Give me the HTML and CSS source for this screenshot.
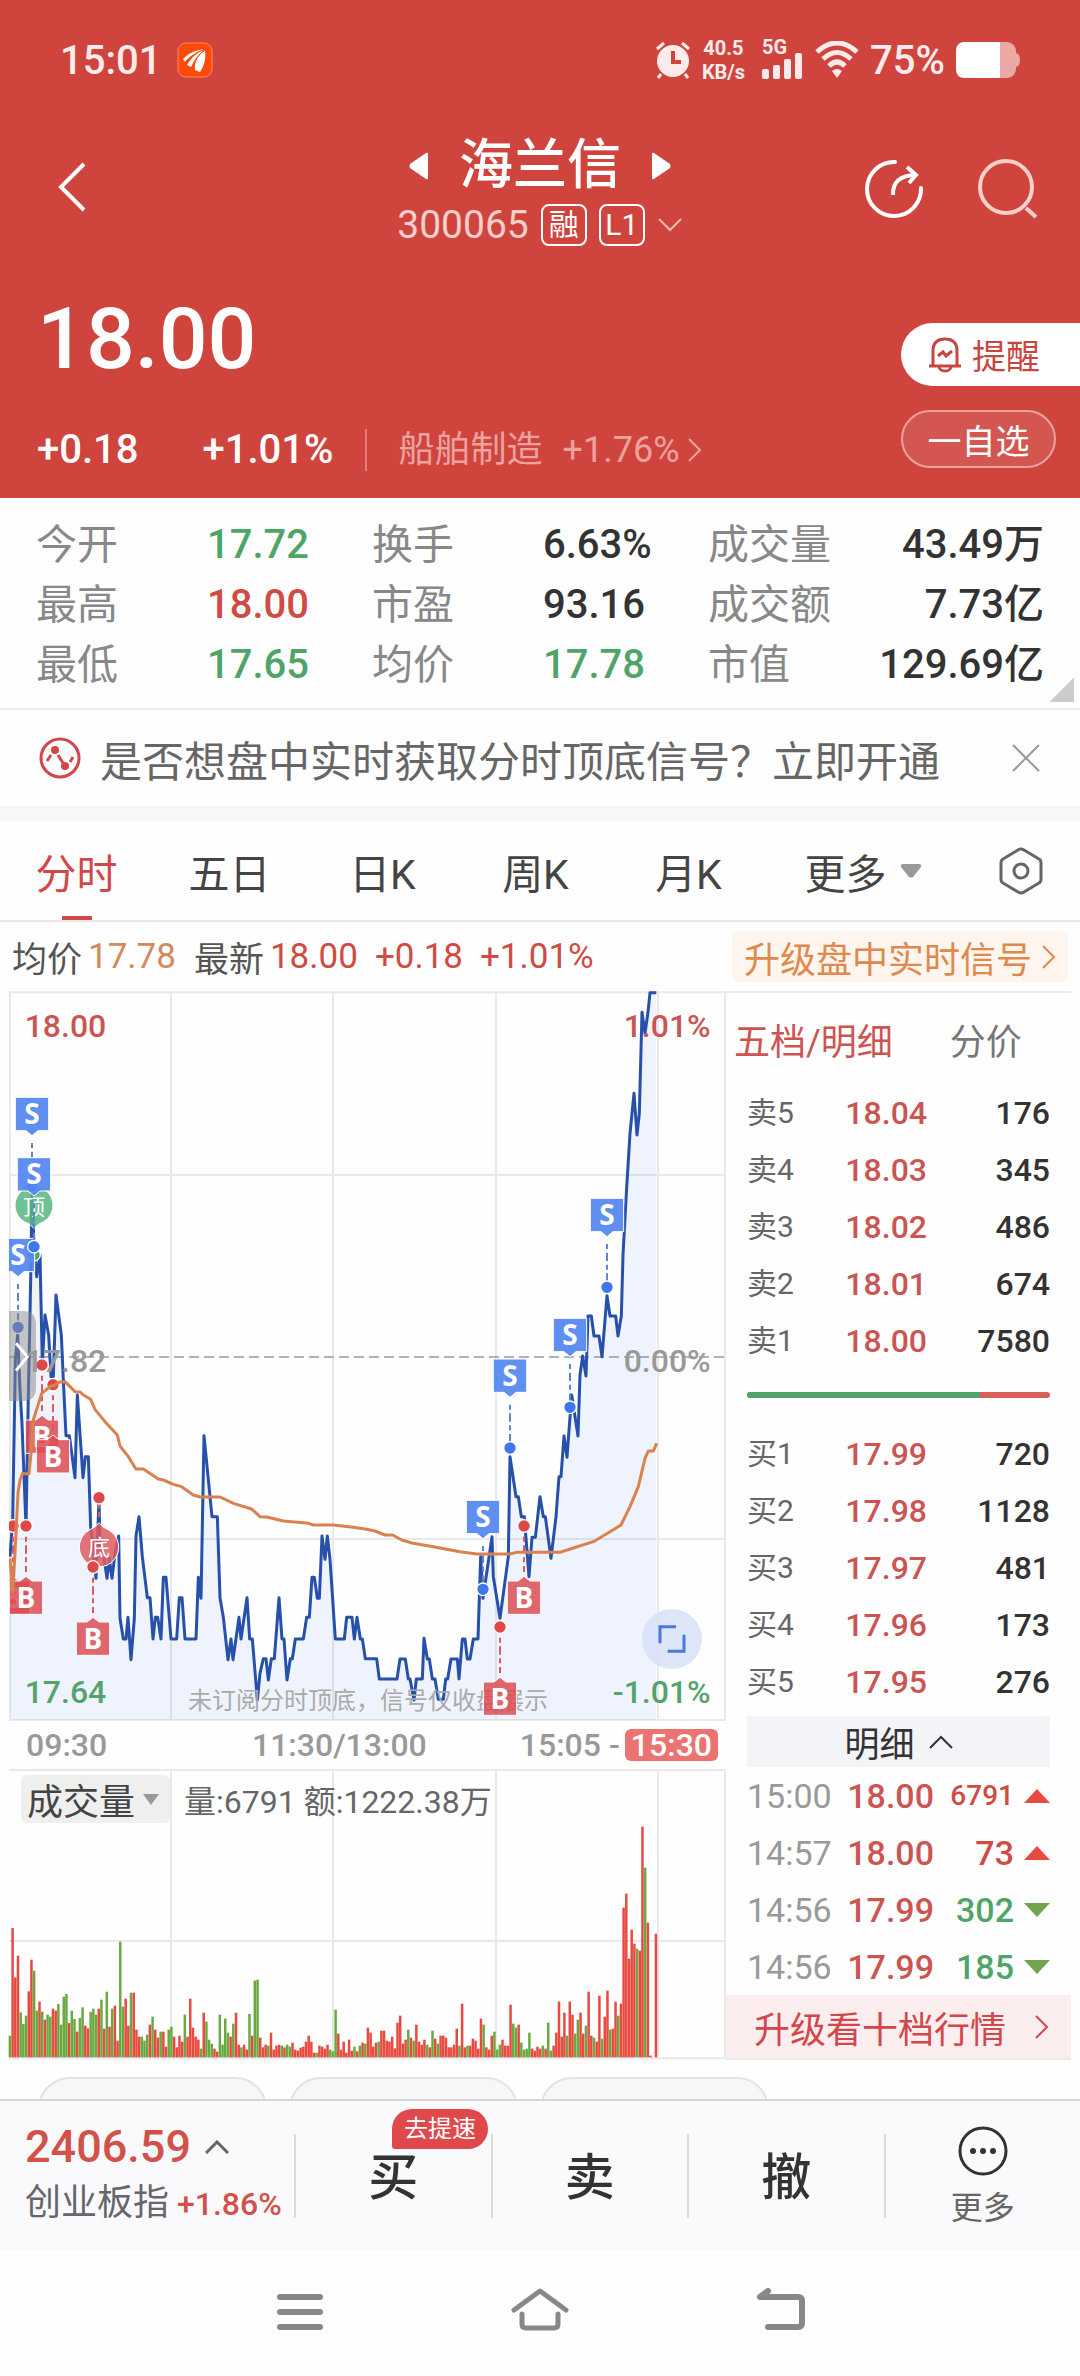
FILE: index.html
```html
<!DOCTYPE html>
<html lang="zh-CN">
<head>
    <meta charset="UTF-8">
    <meta name="viewport" content="width=device-width, initial-scale=1.0">
    <title>海兰信 300065</title>
    <link rel="stylesheet" href="styles.css">
</head>
<body>
    <header class="top">
        <div class="status-bar">
            <span class="clock">15:01</span>
            <svg class="app-icon" width="36" height="36" viewBox="0 0 36 36">
                <rect x="1" y="1" width="34" height="34" rx="8" fill="#ff4a0a" stroke="#ff8a55"/>
                <path d="M6 17C12 11 18 8 28 7C20 10 13 14 8 20zM10 23C14 16 19 11 27 8C21 13 17 18 14 25zM18 28C17 20 21 13 28 8C29 15 28 23 23 30z" fill="#fff"/>
                <path d="M7 21Q15 12 28 7M15 27Q18 15 28 8" fill="none" stroke="#ff4a0a" stroke-width="1"/>
            </svg>
            <div class="status-right">
                <svg width="36" height="38" viewBox="0 0 36 38">
                    <circle cx="18" cy="20" r="16" fill="#fdeaea"/>
                    <path d="M2 8L9 2M34 8L27 2M6 33L3 37M30 33L33 37" stroke="#fdeaea" stroke-width="3"/>
                    <path d="M18 10V21H26" fill="none" stroke="#cf453e" stroke-width="4"/>
                </svg>
                <div class="speed"><span>40.5</span><span>KB/s</span></div>
                <div class="signal">
                    <span>5G</span>
                    <svg width="42" height="26" viewBox="0 0 42 26" fill="#fdeaea">
                        <rect x="0" y="16" width="7" height="10" rx="2"/>
                        <rect x="11" y="12" width="7" height="14" rx="2"/>
                        <rect x="22" y="6" width="7" height="20" rx="2"/>
                        <rect x="33" y="0" width="7" height="26" rx="2"/>
                    </svg>
                </div>
                <svg width="44" height="38" viewBox="0 0 44 38">
                    <path d="M2 11Q22 -7 42 11M8 18Q22 5 36 18M14 25Q22 17 30 25" fill="none" stroke="#fdeaea" stroke-width="5"/>
                    <path d="M17 30Q22 26 27 30L22 37z" fill="#fdeaea"/>
                </svg>
                <span class="percent">75%</span>
                <svg width="64" height="36" viewBox="0 0 64 36">
                    <rect x="0" y="0" width="60" height="36" rx="9" fill="#eba9a6"/>
                    <path d="M60 11Q64 12 64 18Q64 24 60 25z" fill="#eba9a6"/>
                    <path d="M9 0H44V36H9Q0 36 0 27V9Q0 0 9 0z" fill="#fff"/>
                </svg>
            </div>
        </div>

        <div class="title-bar">
            <div class="title-back">
                <button class="icon-button" aria-label="返回">
                    <svg width="28" height="50" viewBox="0 0 28 50"><path d="M26 2L3 25L26 48" fill="none" stroke="#fff" stroke-width="4"/></svg>
                </button>
            </div>
            <div class="stock">
                <div class="stock-name">
                    <svg width="20" height="28" viewBox="0 0 20 28"><path d="M19 2V26Q19 28 17 27L1 16Q0 14 1 12L17 1Q19 0 19 2z" fill="#fff"/></svg>
                    <h1>海兰信</h1>
                    <svg width="20" height="28" viewBox="0 0 20 28"><path d="M1 2V26Q1 28 3 27L19 16Q20 14 19 12L3 1Q1 0 1 2z" fill="#fff"/></svg>
                </div>
                <div class="stock-code">
                    <span>300065</span>
                    <span class="mark">融</span>
                    <span class="mark">L1</span>
                    <svg width="26" height="14" viewBox="0 0 26 14"><path d="M2 1L13 12L24 1" fill="none" stroke="#f3b9b6" stroke-width="2"/></svg>
                </div>
            </div>
            <div class="title-actions">
                <button class="icon-button" aria-label="分享">
                    <svg width="60" height="60" viewBox="0 0 60 60" fill="none" stroke="#fff" stroke-width="4">
                        <path d="M31 3A27 27 0 1 0 57 29" stroke-linecap="round"/>
                        <path d="M29 36Q28 17 51 16M43 8L52 16L45 24"/>
                    </svg>
                </button>
                <button class="icon-button" aria-label="搜索">
                    <svg width="60" height="60" viewBox="0 0 60 60" fill="none" stroke="#f9cfcc" stroke-width="4">
                        <circle cx="28" cy="28" r="26"/>
                        <path d="M48 49L58 58"/>
                    </svg>
                </button>
            </div>
        </div>

        <div class="quote">
            <div class="quote-main">
                <div class="price">18.00</div>
                <div class="change">
                    <span class="diff">+0.18</span>
                    <span class="rate">+1.01%</span>
                    <a class="sector" href="#">
                        <span>船舶制造</span>
                        <span>+1.76%</span>
                        <svg width="14" height="24" viewBox="0 0 14 24"><path d="M1 1L12 12L1 23" fill="none" stroke="#eda29f" stroke-width="2"/></svg>
                    </a>
                </div>
            </div>
            <div class="quote-actions">
                <button class="remind">
                    <svg width="34" height="36" viewBox="0 0 34 36" fill="none" stroke="#c9453f" stroke-width="3">
                        <path d="M5 28V14Q5 2 17 2Q29 2 29 14V28M1 29H33M11 30Q12 34 17 34Q22 34 23 30"/>
                        <path d="M10 19L15 15L18 19L24 14"/>
                    </svg>
                    提醒
                </button>
                <button class="favourite">一自选</button>
            </div>
        </div>
    </header>

    <main>
        <section class="stats">
            <dl>
                <dt>今开</dt><dd class="down">17.72</dd>
                <dt>换手</dt><dd>6.63%</dd>
                <dt>成交量</dt><dd>43.49万</dd>
                <dt>最高</dt><dd class="up">18.00</dd>
                <dt>市盈</dt><dd>93.16</dd>
                <dt>成交额</dt><dd>7.73亿</dd>
                <dt>最低</dt><dd class="down">17.65</dd>
                <dt>均价</dt><dd class="down">17.78</dd>
                <dt>市值</dt><dd>129.69亿</dd>
            </dl>
        </section>

        <section class="notice">
            <svg width="44" height="44" viewBox="0 0 44 44" fill="none" stroke="#d2474a" stroke-width="3">
                <circle cx="22" cy="22" r="19"/>
                <path d="M9 25L13 19M20 19L25 27M32 26L35 21"/>
                <circle cx="17" cy="14" r="4" fill="#d2474a" stroke="none"/>
                <circle cx="27" cy="30" r="4" fill="#d2474a" stroke="none"/>
            </svg>
            <p>是否想盘中实时获取分时顶底信号？立即开通</p>
            <button class="icon-button" aria-label="关闭">
                <svg width="28" height="28" viewBox="0 0 28 28"><path d="M1 1L27 27M27 1L1 27" stroke="#999" stroke-width="2"/></svg>
            </button>
        </section>

        <nav class="tabs">
            <button class="tab active">分时</button>
            <button class="tab">五日</button>
            <button class="tab">日K</button>
            <button class="tab">周K</button>
            <button class="tab">月K</button>
            <button class="tab tab-more">更多<svg width="22" height="14" viewBox="0 0 22 14"><path d="M2 0H20Q22 1 21 3L13 13Q11 14 9 13L1 3Q0 1 2 0z" fill="#999"/></svg></button>
            <button class="settings" aria-label="设置">
                <svg width="44" height="48" viewBox="0 0 44 48" fill="none" stroke="#666" stroke-width="3">
                    <path d="M19 3Q22 1 25 3L40 12Q42 13 42 16V32Q42 35 40 36L25 45Q22 47 19 45L4 36Q2 35 2 32V16Q2 13 4 12z"/>
                    <circle cx="22" cy="24" r="7"/>
                </svg>
            </button>
        </nav>

        <div class="legend">
            <span>均价</span><span class="avg">17.78</span>
            <span class="next">最新</span><span class="up">18.00</span>
            <span class="up wide">+0.18</span>
            <span class="up wide">+1.01%</span>
            <a class="signal-link" href="#">升级盘中实时信号<svg width="14" height="26" viewBox="0 0 14 26"><path d="M1 2L12 13L1 24" fill="none" stroke="#df8a4c" stroke-width="2"/></svg></a>
        </div>

        <div class="board">
            <div class="charts">
                <!-- price chart, three drawing units per pixel -->
                <svg class="price-chart" viewBox="0 33 2178 2190">
                    <defs>
                        <g id="sell">
                            <path d="M-50 0H50V100H18L0 115L-18 100H-50z" fill="#5386f0" fill-opacity=".93" stroke="#fff" stroke-width="3"/>
                            <path d="M0 137V250" stroke="#5c86c9" stroke-width="6" stroke-dasharray="15 11 25 11"/>
                            <circle cy="267" r="19" fill="#3e77ec" stroke="#fff" stroke-width="4"/>
                            <text y="80" class="tag">S</text>
                        </g>
                        <g id="buy">
                            <path d="M-50 165H-18L0 151L18 165H50V265H-50z" fill="#dd4c53" fill-opacity=".85" stroke="#fff" stroke-width="3"/>
                            <path d="M0 32V138" stroke="#d95a61" stroke-width="6" stroke-dasharray="15 11 25 11"/>
                            <circle r="19" fill="#e04848" stroke="#fff" stroke-width="4"/>
                            <text y="246" class="tag">B</text>
                        </g>
                        <clipPath id="plot"><rect x="27" y="30" width="2151" height="2193"/></clipPath>
                    </defs>
                    <g fill="none" stroke="#e9e9e9" stroke-width="6">
                        <path d="M27 37H2178M27 585H2175M27 1677H2175M27 2220H2178"/>
                        <path d="M30 37V2220M513 37V2220M999 37V2220M1488 37V2220M1974 37V2220M2175 37V2220"/>
                    </g>
                    <path d="M27 1131H2175" stroke="#999" stroke-width="5" stroke-dasharray="30 15"/>
                    <g clip-path="url(#plot)">
                        <path id="area" fill="#3e77ec" fill-opacity=".08"/>
                        <polyline id="line" fill="none" stroke="#2650aa" stroke-width="9" stroke-linejoin="round" points="30,1730 38,1620 46,1140 53,1065 60,1230 66,1330 78,1640 84,1300 90,1000 93,850 96,620 102,800 110,890 120,825 127,1150 135,1005 146,1065 153,1190 160,1190 168,945 184,1065 190,1200 198,1367 208,1367 225,1493 232,1245 249,1493 256,1430 265,1430 272,1640 288,1795 297,1560 300,1700 312,1735 321,1795 328,1735 336,1795 345,1720 356,1668 360,1915 370,1977 378,1977 384,1912 393,2039 403,1915 408,1668 417,1610 427,1730 442,1853 450,1853 459,1977 466,1912 473,1912 483,1977 490,1792 498,1792 513,1977 530,1977 538,1853 546,1853 555,1977 588,1977 595,1792 603,1855 612,1367 636,1610 652,1610 660,1853 670,1912 684,2039 693,1977 699,2039 717,1912 723,1977 741,1853 749,1977 757,1977 772,2160 780,2080 790,2036 798,2036 805,2100 814,2036 823,2036 837,1853 846,1977 852,1977 861,2100 871,2036 877,2036 886,1977 910,1977 920,1912 928,1912 936,1792 943,1792 952,1855 958,1855 966,1668 975,1738 982,1668 990,1738 1006,1977 1033,1977 1040,1912 1056,1912 1063,1977 1071,1912 1081,1977 1087,1977 1096,2036 1130,2036 1138,2097 1191,2097 1200,2037 1216,2037 1225,2097 1230,2097 1242,2160 1249,2097 1267,2097 1272,1975 1282,2037 1288,2037 1297,2097 1305,2097 1315,2158 1330,2158 1337,2097 1343,2097 1353,2037 1372,2037 1377,2097 1387,1977 1395,1977 1402,2037 1410,2037 1420,1977 1434,1977 1442,1730 1449,1855 1476,1670 1480,1790 1500,1915 1525,1730 1530,1430 1548,1550 1555,1550 1564,1610 1573,1610 1587,1790 1596,1672 1606,1672 1620,1550 1630,1610 1636,1610 1653,1735 1668,1610 1677,1490 1683,1490 1692,1368 1701,1432 1715,1245 1734,1368 1740,1185 1748,1128 1758,1188 1764,1008 1774,1008 1782,1068 1797,1068 1806,1130 1821,947 1830,1008 1847,1008 1854,1068 1864,1008 1869,825 1879,640 1890,460 1902,340 1911,465 1918,400 1926,97 1935,160 1944,97 1950,38 1969,38"/>
                        <circle cx="102" cy="824" r="19" fill="#4aa56f" stroke="#fff" stroke-width="4"/>
                        <path d="M102 746Q93 732 73 725A57 57 0 1 1 131 725Q111 732 102 746z" fill="#58b584" fill-opacity=".85" stroke="#fff" stroke-width="3"/>
                        <text x="102" y="705" class="pin">顶</text>
                        <use href="#sell" x="54" y="775"/>
                        <use href="#sell" x="96" y="352"/>
                        <use href="#sell" x="102" y="533"/>
                        <use href="#sell" x="1449" y="1561"/>
                        <use href="#sell" x="1530" y="1137"/>
                        <use href="#sell" x="1710" y="1015"/>
                        <use href="#sell" x="1821" y="655"/>
                        <use href="#buy" x="39" y="1638"/>
                        <use href="#buy" x="78" y="1638"/>
                        <use href="#buy" x="126" y="1155"/>
                        <use href="#buy" x="159" y="1214"/>
                        <path d="M297 1628Q306 1642 326 1650A59 59 0 1 1 268 1650Q288 1642 297 1628z" fill="#dd5a62" fill-opacity=".85" stroke="#fff" stroke-width="3"/>
                        <path d="M297 1570V1620" stroke="#d95a61" stroke-width="6" stroke-dasharray="15 11"/>
                        <circle cx="297" cy="1553" r="19" fill="#e04848" stroke="#fff" stroke-width="4"/>
                        <text x="297" y="1726" class="pin">底</text>
                        <use href="#buy" x="279" y="1761"/>
                        <use href="#buy" x="1572" y="1638"/>
                        <polyline fill="none" stroke="#d9814f" stroke-width="9" stroke-linejoin="round" points="30,1735 38,1840 45,1720 54,1540 60,1500 68,1481 87,1481 93,1420 100,1320 125,1240 150,1220 165,1215 175,1207 195,1205 225,1235 240,1236 250,1245 272,1258 285,1288 315,1325 352,1365 360,1398 385,1430 408,1467 430,1467 475,1497 490,1500 520,1513 545,1520 580,1545 600,1551 660,1551 700,1570 755,1587 780,1610 800,1611 850,1623 925,1630 940,1635 1000,1635 1060,1642 1100,1648 1125,1653 1155,1665 1178,1665 1205,1680 1240,1690 1300,1700 1380,1715 1430,1722 1530,1722 1550,1717 1680,1717 1720,1704 1780,1685 1830,1655 1863,1635 1890,1580 1915,1520 1935,1435 1945,1413 1960,1413 1970,1390"/>
                        <text x="564" y="2188" class="hint">未订阅分时顶底，信号仅收盘展示</text>
                        <use href="#buy" x="1500" y="1941"/>
                        <path d="M27 993H68Q108 993 108 1033V1223Q108 1263 68 1263H27z" fill="#888" fill-opacity=".5"/>
                        <path d="M48 1090L82 1130L48 1172" fill="none" stroke="#fff" stroke-width="9"/>
                    </g>
                    <g class="scale">
                        <text x="74" y="171" fill="#cb5553">18.00</text>
                        <text x="74" y="1176" fill="#999">17.82</text>
                        <text x="74" y="2168" fill="#55a36c">17.64</text>
                        <text x="2132" y="171" fill="#cb5553" text-anchor="end">1.01%</text>
                        <text x="2132" y="1176" fill="#999" text-anchor="end">0.00%</text>
                        <text x="2132" y="2168" fill="#55a36c" text-anchor="end">-1.01%</text>
                    </g>
                    <circle cx="2016" cy="1977" r="90" fill="#d5dff8" fill-opacity=".8"/>
                    <path d="M1980 1990V1940H2028M2052 1964V2014H2003" fill="none" stroke="#4a78e0" stroke-width="9"/>
                </svg>

                <div class="time-axis">
                    <span>09:30</span>
                    <span class="noon">11:30/13:00</span>
                    <span>15:05 -</span><span class="after-hours">15:30</span>
                </div>

                <div class="volume">
                    <svg class="volume-chart" viewBox="0 87 2178 873">
                        <g fill="none" stroke="#e9e9e9" stroke-width="6">
                            <path d="M27 90H2178M27 603H2175M27 955H2178"/>
                            <path d="M513 90V955M999 90V955M1488 90V955M1974 90V955M2175 90V955"/>
                        </g>
                        <g id="bars"></g>
                    </svg>
                    <div class="volume-legend">
                        <button>成交量<svg width="16" height="11" viewBox="0 0 16 11"><path d="M0 0H16L8 11z" fill="#999"/></svg></button>
                        <span>量:6791 额:1222.38万</span>
                    </div>
                </div>
            </div>

            <aside class="depth">
                <div class="depth-tabs">
                    <button class="active">五档/明细</button>
                    <button>分价</button>
                </div>
                <table class="levels">
                    <tr><th>卖5</th><td>18.04</td><td>176</td></tr>
                    <tr><th>卖4</th><td>18.03</td><td>345</td></tr>
                    <tr><th>卖3</th><td>18.02</td><td>486</td></tr>
                    <tr><th>卖2</th><td>18.01</td><td>674</td></tr>
                    <tr><th>卖1</th><td>18.00</td><td>7580</td></tr>
                </table>
                <div class="ratio"><span style="width: 77%"></span></div>
                <table class="levels">
                    <tr><th>买1</th><td>17.99</td><td>720</td></tr>
                    <tr><th>买2</th><td>17.98</td><td>1128</td></tr>
                    <tr><th>买3</th><td>17.97</td><td>481</td></tr>
                    <tr><th>买4</th><td>17.96</td><td>173</td></tr>
                    <tr><th>买5</th><td>17.95</td><td>276</td></tr>
                </table>
                <button class="detail">明细<svg width="24" height="14" viewBox="0 0 24 14"><path d="M1 13L12 2L23 13" fill="none" stroke="#333" stroke-width="2"/></svg></button>
                <table class="trades">
                    <tr><th>15:00</th><td>18.00</td><td class="up small">6791</td><td><svg width="26" height="14" viewBox="0 0 26 14"><path d="M0 14L13 0L26 14z" fill="#e84a3f"/></svg></td></tr>
                    <tr><th>14:57</th><td>18.00</td><td class="up">73</td><td><svg width="26" height="14" viewBox="0 0 26 14"><path d="M0 14L13 0L26 14z" fill="#e84a3f"/></svg></td></tr>
                    <tr><th>14:56</th><td>17.99</td><td class="down">302</td><td><svg width="26" height="14" viewBox="0 0 26 14"><path d="M0 0L13 14L26 0z" fill="#72a34d"/></svg></td></tr>
                    <tr><th>14:56</th><td>17.99</td><td class="down">185</td><td><svg width="26" height="14" viewBox="0 0 26 14"><path d="M0 0L13 14L26 0z" fill="#72a34d"/></svg></td></tr>
                </table>
                <a class="upgrade" href="#">升级看十档行情<svg width="14" height="26" viewBox="0 0 14 26"><path d="M1 2L12 13L1 24" fill="none" stroke="#d2474a" stroke-width="2"/></svg></a>
            </aside>
        </div>

        <div class="chips">
            <span class="chip"></span>
            <span class="chip"></span>
            <span class="chip"></span>
        </div>
    </main>

    <footer>
        <div class="trade-bar">
            <div class="index">
                <div class="index-value">2406.59<svg width="24" height="14" viewBox="0 0 24 14"><path d="M1 13L12 2L23 13" fill="none" stroke="#666" stroke-width="3"/></svg></div>
                <div class="index-name">创业板指<span>+1.86%</span></div>
            </div>
            <button class="trade">买<span class="badge">去提速</span></button>
            <button class="trade">卖</button>
            <button class="trade">撤</button>
            <button class="more">
                <svg width="50" height="50" viewBox="0 0 50 50">
                    <circle cx="25" cy="25" r="23" fill="none" stroke="#333" stroke-width="3"/>
                    <g fill="#333"><circle cx="15" cy="25" r="3"/><circle cx="25" cy="25" r="3"/><circle cx="35" cy="25" r="3"/></g>
                </svg>
                更多
            </button>
        </div>
        <div class="system-nav">
            <button class="icon-button" aria-label="最近任务">
                <svg width="60" height="46" viewBox="0 0 60 46"><path d="M10 9H50M10 24H50M10 39H50" stroke="#888" stroke-width="6" stroke-linecap="round"/></svg>
            </button>
            <button class="icon-button" aria-label="主屏幕">
                <svg width="60" height="46" viewBox="0 0 60 46" fill="none" stroke="#888" stroke-width="5" stroke-linecap="round" stroke-linejoin="round"><path d="M4 22L30 3L56 22M12 26V36Q12 40 16 40H44Q48 40 48 36V26"/></svg>
            </button>
            <button class="icon-button" aria-label="后退">
                <svg width="60" height="46" viewBox="0 0 60 46" fill="none" stroke="#888" stroke-width="6" stroke-linecap="round" stroke-linejoin="round"><path d="M18 3L10 9H48Q52 9 52 13V35Q52 39 48 39H18"/></svg>
            </button>
        </div>
    </footer>

    <script src="script.js"></script>
</body>
</html>
```

FILE: styles.css
```css
* {
    box-sizing: border-box;
}
body {
    margin: 0;
    font-family: Roboto, "Noto Sans CJK SC", sans-serif;
    background: #fefefe;
    color: #333;
}
button {
    padding: 0;
    border: none;
    background: none;
    font: inherit;
    color: inherit;
    cursor: pointer;
}
a {
    color: inherit;
    text-decoration: none;
}
svg {
    display: block;
    flex: none;
}
h1, p, dl, dd {
    margin: 0;
}
.up {
    color: #cf4b44;
}
.down {
    color: #4fa568;
}

/* header */
.top {
    height: 498px;
    background: #cf453e;
    color: #fff;
}
.status-bar {
    display: flex;
    align-items: center;
    gap: 16px;
    height: 120px;
    padding: 0 60px;
    color: #fdeaea;
}
.clock, .percent {
    font-size: 40px;
    font-weight: 500;
}
.status-right {
    display: flex;
    align-items: center;
    gap: 11px;
    margin-left: auto;
}
.speed {
    display: flex;
    flex-direction: column;
    align-items: center;
    margin-right: 6px;
    font-size: 20px;
    line-height: 24px;
    font-weight: 700;
}
.signal {
    display: flex;
    flex-direction: column;
    font-size: 20px;
    line-height: 12px;
    font-weight: 700;
}
.title-bar {
    display: flex;
    align-items: center;
    height: 138px;
    padding: 0 42px;
}
.title-bar > * {
    flex: 1;
}
.title-back .icon-button {
    margin-left: 16px;
}
.stock-name, .stock-code {
    display: flex;
    justify-content: center;
    align-items: center;
}
.stock-name {
    gap: 30px;
}
.stock-name h1 {
    font-size: 54px;
    line-height: 72px;
    font-weight: 500;
}
.stock-code {
    gap: 12px;
    font-size: 39px;
    line-height: 46px;
    color: #f9cfcc;
}
.mark {
    width: 46px;
    height: 42px;
    border: 2px solid #fff;
    border-radius: 8px;
    font-size: 30px;
    line-height: 38px;
    text-align: center;
    color: #fff;
}
.title-actions {
    display: flex;
    justify-content: flex-end;
    gap: 54px;
}
.quote {
    display: flex;
    justify-content: space-between;
}
.quote-main {
    padding: 31px 0 0 37px;
}
.price {
    font-size: 86px;
    line-height: 100px;
    font-weight: 500;
}
.change {
    display: flex;
    align-items: center;
    margin-top: 40px;
    font-size: 40px;
    line-height: 42px;
    font-weight: 500;
}
.rate {
    margin-left: 64px;
}
.sector {
    display: flex;
    align-items: center;
    gap: 20px;
    margin-left: 31px;
    padding-left: 32px;
    border-left: 2px solid #e07f7b;
    font-size: 36px;
    font-weight: 400;
    color: #eda29f;
}
.sector svg {
    margin-left: -12px;
}
.quote-actions {
    display: flex;
    flex-direction: column;
    gap: 24px;
    width: 179px;
    padding-top: 65px;
    font-size: 34px;
}
.remind {
    display: flex;
    align-items: center;
    gap: 10px;
    height: 63px;
    padding-left: 27px;
    border-radius: 32px 0 0 32px;
    background: #fff;
    color: #c9453f;
}
.favourite {
    width: 155px;
    height: 58px;
    border: 2px solid #eba19d;
    border-radius: 29px;
    background: #d35651;
}

/* day figures */
.stats {
    height: 212px;
    padding: 17px 36px 0;
    border-bottom: 2px solid #ececec;
    background: linear-gradient(135deg, transparent 50%, #ccc 50%) no-repeat right 6px bottom 6px / 24px 24px;
}
.stats dl {
    display: grid;
    grid-template-columns: repeat(3, minmax(0, 171fr) minmax(0, 165fr));
    font-size: 40px;
    line-height: 60px;
}
.stats dt {
    color: #888;
    font-size: 41px;
    white-space: nowrap;
}
.stats dd {
    font-weight: 500;
    white-space: nowrap;
}
.stats dd:nth-of-type(3n) {
    text-align: right;
}
.notice {
    display: flex;
    align-items: center;
    gap: 18px;
    height: 111px;
    padding: 0 40px 0 38px;
    border-bottom: 15px solid #f7f7f7;
    font-size: 42px;
    color: #666;
}
.notice p {
    flex: 1;
    white-space: nowrap;
}

/* period tabs */
.tabs {
    display: flex;
    align-items: center;
    height: 101px;
    border-bottom: 2px solid #e8e8e8;
    font-size: 41px;
    color: #444;
}
.tab {
    flex: 153;
    display: flex;
    justify-content: center;
    align-items: center;
    gap: 13px;
    height: 99px;
}
.tab-more {
    flex: 196;
}
.settings {
    flex: 119;
    display: flex;
    justify-content: center;
}
.tab.active {
    color: #d2474a;
    background: linear-gradient(#d2474a, #d2474a) no-repeat center bottom / 30px 4px;
}
.legend {
    display: flex;
    align-items: center;
    height: 69px;
    padding: 0 12px;
    font-size: 35px;
    color: #555;
    white-space: nowrap;
}
.legend .avg {
    margin-left: 6px;
    color: #d28a5c;
}
.legend .next {
    margin: 0 6px 0 18px;
}
.legend .wide {
    margin-left: 17px;
}
.signal-link {
    display: flex;
    align-items: center;
    gap: 10px;
    height: 51px;
    margin-left: auto;
    padding: 0 12px;
    border-radius: 6px;
    background: #fdf5ee;
    font-size: 36px;
    color: #df8a4c;
}

/* charts */
.board {
    display: flex;
}
.charts {
    flex: 726;
    min-width: 0;
}
.price-chart, .volume-chart {
    width: 100%;
    height: auto;
}
.tag {
    font: 700 84px "Open Sans", sans-serif;
    fill: #fff;
    text-anchor: middle;
}
.pin {
    font-size: 66px;
    fill: #fff;
    text-anchor: middle;
}
.hint {
    font-size: 72px;
    fill: #aaa;
}
.scale {
    font-size: 96px;
    font-weight: 500;
}
.time-axis {
    display: flex;
    align-items: center;
    height: 48px;
    padding: 0 8px 0 26px;
    font-size: 32px;
    font-weight: 500;
    color: #999;
}
.noon {
    margin: 0 93px 0 auto;
}
.after-hours {
    margin-left: 5px;
    padding: 0 6px;
    border-radius: 6px;
    background: #eb7371;
    line-height: 32px;
    color: #fff;
}
.volume {
    position: relative;
}
.volume-legend {
    position: absolute;
    left: 21px;
    top: 6px;
    display: flex;
    align-items: center;
    gap: 14px;
    font-size: 32px;
    color: #666;
    white-space: nowrap;
}
.volume-legend button {
    display: flex;
    align-items: center;
    gap: 8px;
    height: 48px;
    padding: 0 11px 0 6px;
    border-radius: 6px;
    background: #efefef;
    font-size: 36px;
    color: #444;
}

/* order book */
.depth {
    flex: 345;
    display: flex;
    flex-direction: column;
    margin-right: 9px;
    border-top: 2px solid #e9e9e9;
    border-bottom: 2px solid #e9e9e9;
}
.depth-tabs {
    display: flex;
    gap: 57px;
    height: 91px;
    padding-left: 8px;
    font-size: 36px;
    color: #777;
}
.depth-tabs .active {
    color: #cf5350;
}
.levels, .trades {
    margin: 0 21px;
    border-collapse: collapse;
    table-layout: fixed;
}
.levels th, .levels td, .trades th, .trades td {
    height: 57px;
    padding: 0;
    font-size: 32px;
    line-height: 56px;
    font-weight: 500;
    text-align: right;
}
.levels th {
    width: 80px;
    font-size: 30px;
    font-weight: 400;
    text-align: left;
    color: #666;
}
.levels td:nth-child(2) {
    width: 100px;
    color: #cb5553;
}
.ratio {
    height: 6px;
    margin: 23px 21px 27px;
    border-radius: 3px;
    background: #d95d58;
    overflow: hidden;
}
.ratio span {
    display: block;
    height: 6px;
    background: #55a36c;
}
.detail {
    display: flex;
    justify-content: center;
    align-items: center;
    gap: 14px;
    height: 51px;
    margin: 6px 21px 0;
    background: #f3f4f8;
    font-size: 35px;
}
.trades th, .trades td {
    font-size: 34px;
}
.trades th {
    width: 86px;
    font-weight: 400;
    text-align: left;
    color: #999;
}
.trades td:nth-child(2) {
    width: 101px;
    color: #cb5553;
}
.trades td:last-child {
    width: 36px;
}
.trades .small {
    font-size: 28px;
}
.trades svg {
    margin-left: auto;
}
.upgrade {
    display: flex;
    justify-content: space-between;
    align-items: center;
    flex: 1;
    padding: 0 22px 0 28px;
    background: #fceeee;
    font-size: 36px;
    color: #d2474a;
}
.chips {
    display: flex;
    gap: 22px;
    height: 39px;
    padding: 17px 38px 0;
    overflow: hidden;
}
.chip {
    width: 229px;
    height: 64px;
    border: 2px solid #e3e3e3;
    border-radius: 32px;
    background: #f7f7f7;
}

/* bottom bars */
.trade-bar {
    display: flex;
    align-items: center;
    height: 151px;
    border-top: 2px solid #d6d6d8;
    background: #fafafc;
}
.index {
    width: 294px;
    padding: 2px 0 0 25px;
    white-space: nowrap;
}
.index-value {
    display: flex;
    align-items: center;
    gap: 14px;
    font-size: 45px;
    line-height: 54px;
    font-weight: 500;
    color: #d2514a;
}
.index-name {
    font-size: 36px;
    line-height: 58px;
    color: #66666c;
}
.index-name span {
    margin-left: 8px;
    font-size: 32px;
    font-weight: 500;
    color: #d2514a;
}
.trade, .more {
    flex: 1;
    position: relative;
    height: 84px;
    border-left: 2px solid #dcdcde;
    font-size: 50px;
    font-weight: 500;
}
.trade {
    padding-bottom: 6px;
}
.more {
    display: flex;
    flex-direction: column;
    align-items: center;
    justify-content: center;
    gap: 10px;
    padding-top: 4px;
    font-size: 32px;
    line-height: 44px;
    font-weight: 400;
    color: #666;
}
.badge {
    position: absolute;
    left: 96px;
    top: -25px;
    padding: 0 12px;
    border-radius: 20px 20px 20px 3px;
    background: #e0484c;
    font-size: 24px;
    line-height: 40px;
    font-weight: 400;
    color: #fff;
    white-space: nowrap;
}
.system-nav {
    display: flex;
    justify-content: center;
    gap: 180px;
    padding: 38px 0 42px;
}
```

FILE: script.js
```js
// one bar per minute: height followed by r (up) or g (down)
const volumes = '65g 388r 240r 305r 135g 100g 125g 198r 293r 260g 140g 167r 137g 113r 128g 122g 146r 140r 160g 98g ' +
    '182g 190g 103r 140g 115g 77r 118g 150g 95r 87r 136g 146g 128g 146r 173g 86r 197g 92r 146g 155r ' +
    '50r 347g 152g 176r 95r 194g 194r 83r 62r 62g 50g 68g 98r 122g 83r 59r 77g 77r 32r 83g ' +
    '92g 62r 30r 65r 47r 128g 62r 176r 89r 62r 53r 26g 134r 107g 53g 41g 26r 17r 128g 38g ' +
    '116g 74g 62r 101g 134r 38r 30g 38r 23r 130g 65r 230g 233g 59r 30r 38r 35g 74r 23r 35r ' +
    '38r 35g 30r 38g 32g 44r 23r 20r 29r 32r 47r 65r 47r 14r 14g 35r 32r 26r 38r 23g ' +
    '18g 143g 71r 23r 47r 14r 53r 20r 32g 18r 35g 44r 41g 89r 74r 32r 44r 47g 80r 80r ' +
    '50r 47r 62r 27r 104r 125r 41r 53r 83g 59r 50g 98r 47r 38r 53r 38g 30r 80g 56r 41g ' +
    '65r 65r 59r 30r 30r 38r 86r 35g 161r 30r 35g 35r 56r 50r 26r 116r 98g 30r 23r 65r ' +
    '77g 23g 38g 53r 35r 35r 158r 101g 89g 98r 44g 23g 26g 74g 26r 20r 32r 26r 35g 26r ' +
    '104g 20g 35r 74r 167r 62r 134r 65g 167r 128r 71g 113g 134r 71r 95g 197r 65r 59g 47r 185r ' +
    '56g 122r 200r 83g 86r 167r 125g 161r 449r 491r 296r 383r 341r 326g 320r 692r 569g 404r 5r 0r 371r';

const bars = document.getElementById('bars');
volumes.split(' ').forEach((item, i) => {
    const height = parseInt(item);
    const bar = document.createElementNS('http://www.w3.org/2000/svg', 'rect');
    bar.setAttribute('x', 26 + i * 8.075);
    bar.setAttribute('y', 952 - height);
    bar.setAttribute('width', 7.5);
    bar.setAttribute('height', height);
    bar.setAttribute('fill', item.endsWith('g') ? '#69aa40' : '#e84a3f');
    bars.appendChild(bar);
});

// tint below the price line
const points = document.getElementById('line').getAttribute('points');
document.getElementById('area').setAttribute('d', 'M30 2220L' + points + 'L1969 2220z');
```
